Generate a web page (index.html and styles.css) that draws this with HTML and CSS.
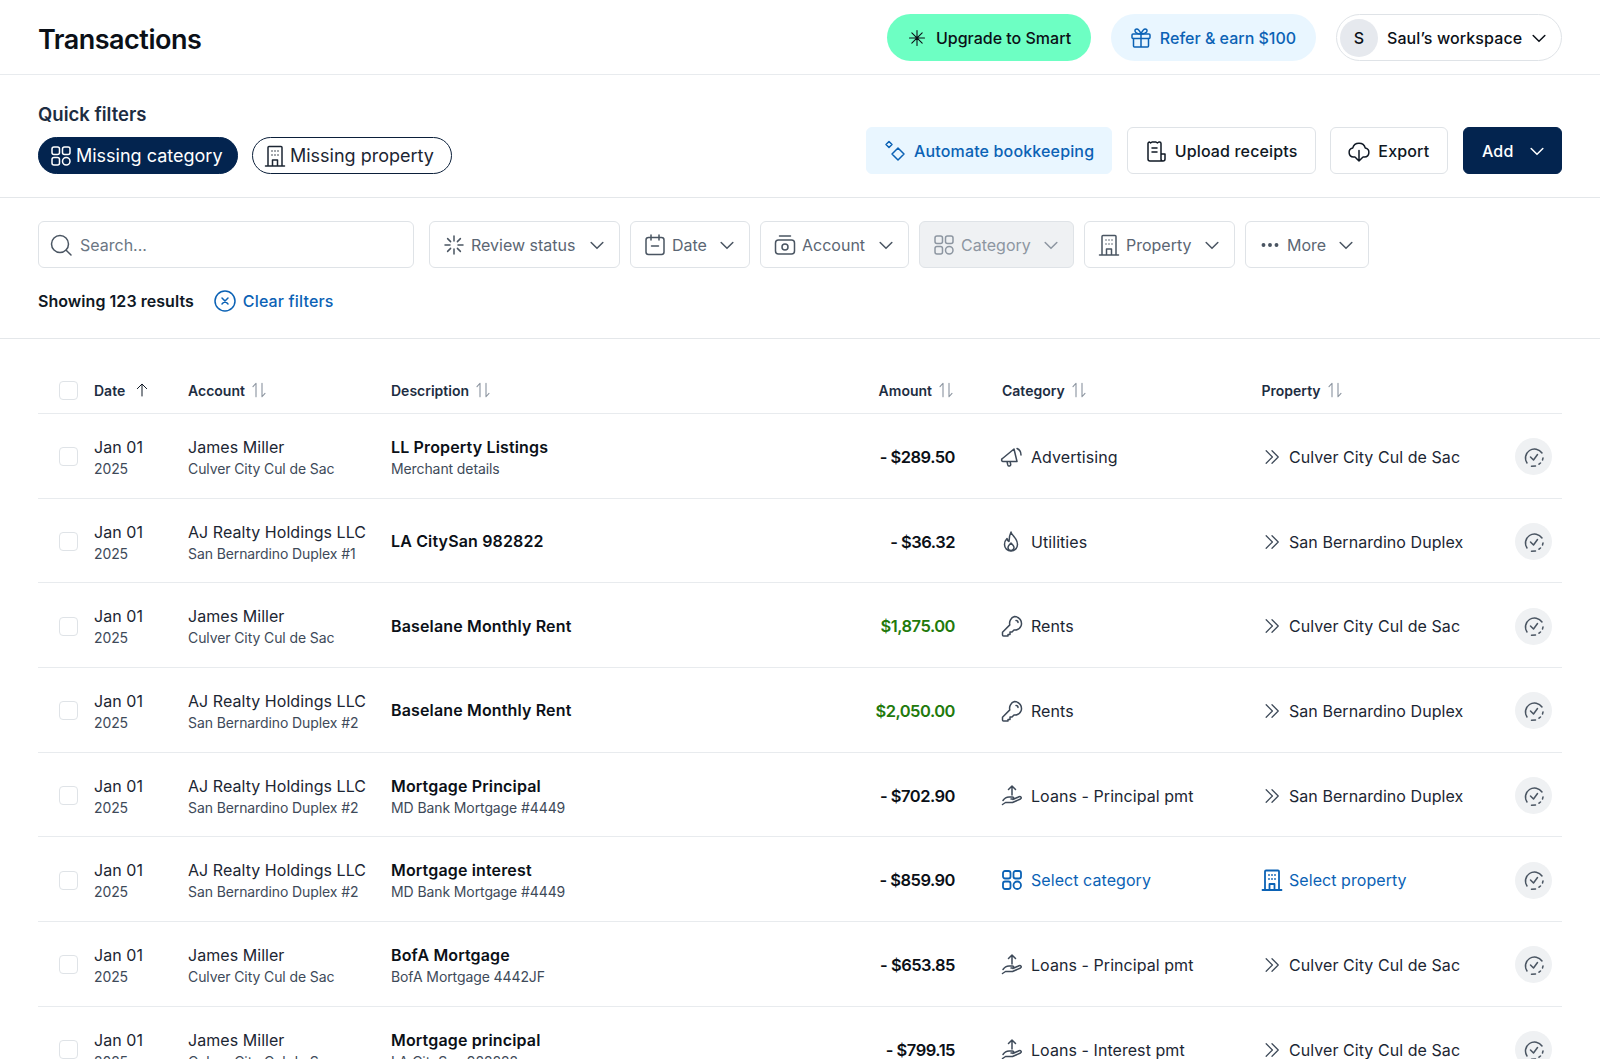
FILE: index.html
```html
<!DOCTYPE html>
<html lang="en">
<head>
  <meta charset="UTF-8">
  <title>Transactions</title>
  <link rel="stylesheet" href="styles.css">
</head>
<body>
  <svg class="icon-defs" aria-hidden="true">
    <symbol id="i-chevron" viewBox="0 0 24 24"><path d="M5 9l7 7 7-7"/></symbol>
    <symbol id="i-star" viewBox="0 0 24 24"><path d="M12 3v18M3 12h18M5.8 5.8l12.4 12.4M18.2 5.8L5.8 18.2"/></symbol>
    <symbol id="i-gift" viewBox="0 0 24 24"><rect x="3" y="8" width="18" height="4.5" rx="1"/><path d="M4.5 12.5V20a1 1 0 0 0 1 1h13a1 1 0 0 0 1-1v-7.5M12 8v13M12 8c-1-3-3-5.5-5-4.8-2 .8-1.5 4.8 5 4.8zM12 8c1-3 3-5.5 5-4.8 2 .8 1.5 4.8-5 4.8z"/></symbol>
    <symbol id="i-grid" viewBox="0 0 24 24"><rect x="3" y="3" width="7.5" height="7.5" rx="2"/><rect x="13.5" y="3" width="7.5" height="7.5" rx="2"/><rect x="3" y="13.5" width="7.5" height="7.5" rx="2"/><circle cx="17.25" cy="17.25" r="3.75"/></symbol>
    <symbol id="i-building" viewBox="0 0 24 24"><path d="M2.5 22h19M5 22V3.5a1 1 0 0 1 1-1h12a1 1 0 0 1 1 1V22M9.5 22v-6h5v6M9 7h.01M12 7h.01M15 7h.01M9 11h.01M12 11h.01M15 11h.01"/></symbol>
    <symbol id="i-sparkle" viewBox="0 0 24 24"><path d="M15 9l6 6-6 6-6-6zM6 2.5L9 5.5 6 8.5 3 5.5z"/></symbol>
    <symbol id="i-receipt" viewBox="0 0 24 24"><path d="M17 15V4.5A1.500 1.500 0 0 0 15.500 3h-.7l-1.400 1-1.400-1H8L6.600 4 5.500 3A1.500 1.500 0 0 0 4 4.500V20a2 2 0 0 0 2 2h13a2 2 0 0 0 2-2v-5h-4v5a2 2 0 0 0 2 2M8 9h5M8 13h5"/></symbol>
    <symbol id="i-cloud" viewBox="0 0 24 24"><path d="M8 18H6.500a4.500 4.500 0 0 1-.8-8.900 6.500 6.500 0 0 1 12.600 0A4.500 4.500 0 0 1 17.500 18H16M12 11.500V22M8.500 18.500L12 22l3.500-3.500"/></symbol>
    <symbol id="i-search" viewBox="0 0 24 24"><circle cx="11" cy="11" r="8.5"/><path d="M17.2 17.2L22 22"/></symbol>
    <symbol id="i-loader" viewBox="0 0 24 24"><path d="M12 3v5M12 16v5M3 12h5M16 12h5M5.6 5.6l3 3M15.4 15.4l3 3M18.4 5.6l-3 3M8.6 15.4l-3 3"/></symbol>
    <symbol id="i-calendar" viewBox="0 0 24 24"><rect x="3" y="4.5" width="18" height="17" rx="2.5"/><path d="M8 2v5M16 2v5M8.5 13h7"/></symbol>
    <symbol id="i-cash" viewBox="0 0 24 24"><rect x="2.5" y="7" width="19" height="14" rx="3"/><circle cx="12" cy="14" r="3"/><path d="M6.5 3h11"/></symbol>
    <symbol id="i-dots" viewBox="0 0 24 24"><circle class="dot" cx="5.5" cy="12" r="1.2"/><circle class="dot" cx="12" cy="12" r="1.2"/><circle class="dot" cx="18.5" cy="12" r="1.2"/></symbol>
    <symbol id="i-clear" viewBox="0 0 24 24"><circle cx="12" cy="12" r="10"/><path d="M9 9l6 6M15 9l-6 6"/></symbol>
    <symbol id="i-sort" viewBox="0 0 24 24"><path d="M8 21V3L4 7.5M16 3v18l4-4.500"/></symbol>
    <symbol id="i-up" viewBox="0 0 24 24"><path d="M12 21V3.5M5 10l7-7 7 7"/></symbol>
    <symbol id="i-megaphone" viewBox="0 0 24 24"><path d="M2.500 13.500L14 4l3 12.500H3.500a1.600 1.600 0 0 1-1-3zM7 16.500l.8 3.500a1.500 1.500 0 0 0 2.900-.7l-.6-2.800M17 3.500c2.500 1 4 3.500 4 6.500"/></symbol>
    <symbol id="i-flame" viewBox="0 0 24 24"><path d="M11 2c.5 3.500 6.500 6 6.500 12.500a6.500 6.500 0 0 1-13 0c0-2.500 1-4.500 2.500-6 .3 1.500 1 2.500 2 3C9 8.500 9.500 5 11 2z"/><path d="M11 13c1.500 1.500 3 3 3 4.500a3 3 0 0 1-6 0c0-1.500 1.500-3 3-4.500z"/></symbol>
    <symbol id="i-key" viewBox="0 0 24 24"><path d="M14.500 2.500a7 7 0 0 1 6.500 9.500c-1 2.500-3.500 4-6 4l-1-.1-2 2.100h-2v2.500H8v1.500H3.500a1 1 0 0 1-1-1v-2.800l7.300-7.300A7 7 0 0 1 14.500 2.500z"/><path d="M16 6.500a2 2 0 0 1 2 2"/></symbol>
    <symbol id="i-hand" viewBox="0 0 24 24"><path d="M12 11V2M8.500 5.500L12 2l3.500 3.500M2.500 20.500l3-2h7l8-3.500c1.500-1 .3-3-1.500-2.300L14 15h-3M3 16.500c2-3 4-3.500 6-3.500h3.500c1.500 0 2 2 .5 2.500"/></symbol>
    <symbol id="i-double" viewBox="0 0 24 24"><path d="M5 4.5l7.500 7.500L5 19.500M12 4.500l7.500 7.500-7.500 7.500"/></symbol>
    <symbol id="i-review" viewBox="0 0 24 24"><path d="M20 8a9 9 0 1 0-15 10M8.500 12l3 3 4-5.500M21 13l-.5 2M18.500 18L17 19.200M13.500 21l-4 .2"/></symbol>
  </svg>

  <div class="page">
    <header class="topbar">
      <h1 class="page-title">Transactions</h1>
      <div class="topbar-actions">
        <button class="pill pill-mint"><svg class="icon star"><use href="#i-star"/></svg>Upgrade to Smart</button>
        <button class="pill pill-sky"><svg class="icon icon-lg"><use href="#i-gift"/></svg>Refer &amp; earn $100</button>
        <button class="workspace">
          <span class="avatar">S</span>
          <span class="workspace-name">Saul’s workspace</span>
          <svg class="icon chevron"><use href="#i-chevron"/></svg>
        </button>
      </div>
    </header>

    <section class="quick">
      <div>
        <div class="quick-label">Quick filters</div>
        <div class="quick-pills">
          <button class="chip chip-on"><svg class="icon icon-lg"><use href="#i-grid"/></svg>Missing category</button>
          <button class="chip"><svg class="icon icon-lg"><use href="#i-building"/></svg>Missing property</button>
        </div>
      </div>
      <div class="quick-actions">
        <button class="action action-sky"><svg class="icon icon-lg"><use href="#i-sparkle"/></svg>Automate bookkeeping</button>
        <button class="action action-upload"><svg class="icon icon-lg"><use href="#i-receipt"/></svg>Upload receipts</button>
        <button class="action action-export"><svg class="icon icon-lg"><use href="#i-cloud"/></svg>Export</button>
        <button class="action action-navy">Add<svg class="icon chevron"><use href="#i-chevron"/></svg></button>
      </div>
    </section>

    <section class="filters">
      <div class="filter-row">
        <label class="search"><svg class="icon icon-lg"><use href="#i-search"/></svg><input class="search-input" placeholder="Search..."></label>
        <button class="filter f-review"><svg class="icon icon-lg"><use href="#i-loader"/></svg>Review status<svg class="icon chevron"><use href="#i-chevron"/></svg></button>
        <button class="filter f-date"><svg class="icon icon-lg"><use href="#i-calendar"/></svg>Date<svg class="icon chevron"><use href="#i-chevron"/></svg></button>
        <button class="filter f-account"><svg class="icon icon-lg"><use href="#i-cash"/></svg>Account<svg class="icon chevron"><use href="#i-chevron"/></svg></button>
        <button class="filter f-category filter-off"><svg class="icon icon-lg"><use href="#i-grid"/></svg>Category<svg class="icon chevron"><use href="#i-chevron"/></svg></button>
        <button class="filter f-property"><svg class="icon icon-lg"><use href="#i-building"/></svg>Property<svg class="icon chevron"><use href="#i-chevron"/></svg></button>
        <button class="filter f-more"><svg class="icon icon-lg"><use href="#i-dots"/></svg>More<svg class="icon chevron"><use href="#i-chevron"/></svg></button>
      </div>
      <div class="results">
        <span class="results-count">Showing 123 results</span>
        <a class="clear-link"><svg class="icon icon-lg"><use href="#i-clear"/></svg>Clear filters</a>
      </div>
    </section>

    <section class="table">
      <div class="row row-head">
        <span class="check"></span>
        <span class="th">Date<svg class="icon sort sort-on"><use href="#i-up"/></svg></span>
        <span class="th">Account<svg class="icon sort"><use href="#i-sort"/></svg></span>
        <span class="th">Description<svg class="icon sort"><use href="#i-sort"/></svg></span>
        <span class="th th-amount">Amount<svg class="icon sort"><use href="#i-sort"/></svg></span>
        <span class="th th-category">Category<svg class="icon sort"><use href="#i-sort"/></svg></span>
        <span class="th">Property<svg class="icon sort"><use href="#i-sort"/></svg></span>
        <span></span>
      </div>

      <div class="row">
        <span class="check"></span>
        <div><div class="line">Jan 01</div><div class="sub">2025</div></div>
        <div><div class="line">James Miller</div><div class="sub">Culver City Cul de Sac</div></div>
        <div><div class="line strong">LL Property Listings</div><div class="sub">Merchant details</div></div>
        <div class="amount">- $289.50</div>
        <div class="tag tag-category"><svg class="icon icon-lg"><use href="#i-megaphone"/></svg>Advertising</div>
        <div class="tag"><svg class="icon double"><use href="#i-double"/></svg>Culver City Cul de Sac</div>
        <div class="review"><svg class="icon"><use href="#i-review"/></svg></div>
      </div>

      <div class="row">
        <span class="check"></span>
        <div><div class="line">Jan 01</div><div class="sub">2025</div></div>
        <div><div class="line">AJ Realty Holdings LLC</div><div class="sub">San Bernardino Duplex #1</div></div>
        <div><div class="line strong">LA CitySan 982822</div></div>
        <div class="amount">- $36.32</div>
        <div class="tag tag-category"><svg class="icon icon-lg"><use href="#i-flame"/></svg>Utilities</div>
        <div class="tag"><svg class="icon double"><use href="#i-double"/></svg>San Bernardino Duplex</div>
        <div class="review"><svg class="icon"><use href="#i-review"/></svg></div>
      </div>

      <div class="row">
        <span class="check"></span>
        <div><div class="line">Jan 01</div><div class="sub">2025</div></div>
        <div><div class="line">James Miller</div><div class="sub">Culver City Cul de Sac</div></div>
        <div><div class="line strong">Baselane Monthly Rent</div></div>
        <div class="amount amount-in">$1,875.00</div>
        <div class="tag tag-category"><svg class="icon icon-lg"><use href="#i-key"/></svg>Rents</div>
        <div class="tag"><svg class="icon double"><use href="#i-double"/></svg>Culver City Cul de Sac</div>
        <div class="review"><svg class="icon"><use href="#i-review"/></svg></div>
      </div>

      <div class="row">
        <span class="check"></span>
        <div><div class="line">Jan 01</div><div class="sub">2025</div></div>
        <div><div class="line">AJ Realty Holdings LLC</div><div class="sub">San Bernardino Duplex #2</div></div>
        <div><div class="line strong">Baselane Monthly Rent</div></div>
        <div class="amount amount-in">$2,050.00</div>
        <div class="tag tag-category"><svg class="icon icon-lg"><use href="#i-key"/></svg>Rents</div>
        <div class="tag"><svg class="icon double"><use href="#i-double"/></svg>San Bernardino Duplex</div>
        <div class="review"><svg class="icon"><use href="#i-review"/></svg></div>
      </div>

      <div class="row">
        <span class="check"></span>
        <div><div class="line">Jan 01</div><div class="sub">2025</div></div>
        <div><div class="line">AJ Realty Holdings LLC</div><div class="sub">San Bernardino Duplex #2</div></div>
        <div><div class="line strong">Mortgage Principal</div><div class="sub">MD Bank Mortgage #4449</div></div>
        <div class="amount">- $702.90</div>
        <div class="tag tag-category"><svg class="icon icon-lg"><use href="#i-hand"/></svg>Loans - Principal pmt</div>
        <div class="tag"><svg class="icon double"><use href="#i-double"/></svg>San Bernardino Duplex</div>
        <div class="review"><svg class="icon"><use href="#i-review"/></svg></div>
      </div>

      <div class="row">
        <span class="check"></span>
        <div><div class="line">Jan 01</div><div class="sub">2025</div></div>
        <div><div class="line">AJ Realty Holdings LLC</div><div class="sub">San Bernardino Duplex #2</div></div>
        <div><div class="line strong">Mortgage interest</div><div class="sub">MD Bank Mortgage #4449</div></div>
        <div class="amount">- $859.90</div>
        <div class="tag tag-category tag-empty"><svg class="icon icon-lg"><use href="#i-grid"/></svg>Select category</div>
        <div class="tag tag-empty"><svg class="icon icon-lg"><use href="#i-building"/></svg>Select property</div>
        <div class="review"><svg class="icon"><use href="#i-review"/></svg></div>
      </div>

      <div class="row">
        <span class="check"></span>
        <div><div class="line">Jan 01</div><div class="sub">2025</div></div>
        <div><div class="line">James Miller</div><div class="sub">Culver City Cul de Sac</div></div>
        <div><div class="line strong">BofA Mortgage</div><div class="sub">BofA Mortgage 4442JF</div></div>
        <div class="amount">- $653.85</div>
        <div class="tag tag-category"><svg class="icon icon-lg"><use href="#i-hand"/></svg>Loans - Principal pmt</div>
        <div class="tag"><svg class="icon double"><use href="#i-double"/></svg>Culver City Cul de Sac</div>
        <div class="review"><svg class="icon"><use href="#i-review"/></svg></div>
      </div>

      <div class="row">
        <span class="check"></span>
        <div><div class="line">Jan 01</div><div class="sub">2025</div></div>
        <div><div class="line">James Miller</div><div class="sub">Culver City Cul de Sac</div></div>
        <div><div class="line strong">Mortgage principal</div><div class="sub">LA CitySan 982822</div></div>
        <div class="amount">- $799.15</div>
        <div class="tag tag-category"><svg class="icon icon-lg"><use href="#i-hand"/></svg>Loans - Interest pmt</div>
        <div class="tag"><svg class="icon double"><use href="#i-double"/></svg>Culver City Cul de Sac</div>
        <div class="review"><svg class="icon"><use href="#i-review"/></svg></div>
      </div>
    </section>
  </div>
</body>
</html>
```

FILE: styles.css
```css
* {
  box-sizing: border-box;
}
html, body {
  margin: 0;
  height: 100%;
  overflow: hidden;
}
body {
  font-family: "Inter", "Liberation Sans", sans-serif;
  font-size: 16px;
  color: #1c2633;
  background-color: #fff;
}
button {
  font-family: inherit;
  cursor: pointer;
  white-space: nowrap;
}
.icon-defs {
  display: none;
}
.icon {
  width: 24px;
  height: 24px;
  flex: none;
  fill: none;
  stroke: currentColor;
  stroke-width: 1.5;
  stroke-linecap: round;
  stroke-linejoin: round;
}
/* glyphs sit inside a 24 box, the negative margin keeps a 20px slot */
.icon-lg {
  margin: -2px;
}
.chevron {
  width: 20px;
  height: 20px;
  stroke-width: 1.8;
}
.star {
  width: 20px;
  height: 20px;
  stroke-width: 1.3;
}
.double {
  width: 20px;
  height: 20px;
}
.dot {
  fill: currentColor;
}
.page {
  height: 1059px;
  overflow: hidden;
}

/* top bar */
.topbar {
  display: flex;
  justify-content: space-between;
  align-items: center;
  padding: 14px 38px 13px;
  border-bottom: 1px solid #e8ebee;
}
.page-title {
  margin: 0;
  padding-top: 3px;
  font-size: 27px;
  font-weight: 600;
  letter-spacing: -0.5px;
  color: #0b1017;
}
.topbar-actions {
  display: flex;
  gap: 20px;
}
.pill {
  display: flex;
  align-items: center;
  justify-content: center;
  gap: 9px;
  width: 204px;
  height: 47px;
  border: 0;
  border-radius: 24px;
  font-size: 16px;
  font-weight: 500;
}
.pill-mint {
  background-color: #6dffc3;
  color: #0b1017;
}
.pill-sky {
  width: 205px;
  background-color: #e9f6ff;
  color: #0b62b5;
}
.workspace {
  display: flex;
  align-items: center;
  width: 226px;
  height: 47px;
  padding: 0 12px 0 3px;
  border: 1px solid #dfe3e7;
  border-radius: 24px;
  background-color: #fff;
  color: #0b1017;
}
.avatar {
  width: 38px;
  height: 38px;
  border-radius: 50%;
  background-color: #e6e9ee;
  font-size: 16px;
  font-weight: 500;
  line-height: 38px;
  text-align: center;
}
.workspace-name {
  margin: 0 auto 0 9px;
  font-size: 16px;
  font-weight: 500;
  letter-spacing: 0.1px;
}

/* quick filters */
.quick {
  display: flex;
  justify-content: space-between;
  align-items: flex-end;
  padding: 28px 38px 23px;
  border-bottom: 1px solid #e4e7ea;
}
.quick-label {
  font-size: 18.5px;
  font-weight: 600;
  line-height: 22px;
  color: #1d2d42;
  margin-bottom: 12px;
}
.quick-pills {
  display: flex;
  gap: 14px;
}
.chip {
  display: flex;
  align-items: center;
  gap: 5px;
  width: 200px;
  height: 37px;
  padding: 0 12px;
  border: 1px solid #0b1f3a;
  border-radius: 19px;
  background-color: #fff;
  color: #1c2633;
  font-size: 18px;
}
.chip-on {
  background-color: #03244f;
  border-color: #03244f;
  color: #fff;
}
.quick-actions {
  display: flex;
  gap: 14.67px;
}
.action {
  display: flex;
  align-items: center;
  gap: 9px;
  height: 47px;
  padding: 0 18px;
  border: 1px solid #dfe3e7;
  border-radius: 6px;
  background-color: #fff;
  color: #0f1824;
  font-size: 16px;
  font-weight: 500;
  letter-spacing: 0.15px;
}
.action-sky {
  width: 246px;
  background-color: #e9f6ff;
  border-color: #e9f6ff;
  color: #0b62b5;
}
.action-upload {
  width: 189px;
}
.action-export {
  width: 118px;
}
.action-navy {
  width: 99px;
  justify-content: space-between;
  padding-right: 14px;
  background-color: #03244f;
  border-color: #03244f;
  color: #fff;
}

/* filter row */
.filters {
  padding: 23px 38px 26px;
  border-bottom: 1px solid #e4e7ea;
}
.filter-row {
  display: flex;
  gap: 10px;
}
.search {
  display: flex;
  align-items: center;
  gap: 9px;
  width: 376px;
  height: 47px;
  margin-right: 5px;
  padding: 0 12px;
  border: 1px solid #dfe3e7;
  border-radius: 6px;
  color: #4a5562;
}
.search-input {
  flex: 1;
  border: 0;
  outline: 0;
  padding: 0;
  font-family: inherit;
  font-size: 16px;
}
.search-input::placeholder {
  color: #6b7683;
}
.filter {
  display: flex;
  align-items: center;
  gap: 7px;
  height: 47px;
  padding: 0 12px 0 14px;
  border: 1px solid #dfe3e7;
  border-radius: 6px;
  background-color: #fff;
  color: #5b6673;
  font-size: 16px;
}
.filter .icon-lg {
  color: #4a5562;
}
.filter .chevron {
  margin-left: auto;
  color: #4a5562;
}
.f-review { width: 191px; }
.f-date { width: 120px; }
.f-account { width: 149px; }
.f-category { width: 155px; }
.f-property { width: 151px; }
.f-more { width: 124px; }
.filter-off {
  background-color: #eff1f3;
  color: #8d96a1;
}
.filter-off .icon-lg,
.filter-off .chevron {
  color: #8d96a1;
}
.results {
  display: flex;
  align-items: center;
  margin-top: 22px;
  line-height: 22px;
}
.results-count {
  font-weight: 600;
  color: #0f1824;
  letter-spacing: 0.05px;
}
.clear-link {
  display: flex;
  align-items: center;
  gap: 8px;
  margin-left: 21px;
  font-weight: 500;
  letter-spacing: 0.15px;
  color: #0b62b5;
}

/* table */
.table {
  margin: 0 38px;
}
.row {
  display: grid;
  grid-template-columns: 56px 94px 203px 464px 100px 306.5px 253.5px 1fr;
  align-items: center;
  height: 84.7px;
  padding-top: 2px;
  border-bottom: 1px solid #e8ebee;
}
.row-head {
  height: 75px;
  padding-top: 28px;
}
.check {
  width: 19px;
  height: 19px;
  margin-left: 21px;
  border: 1px solid #dfe3e7;
  border-radius: 4px;
}
.th {
  display: flex;
  align-items: center;
  gap: 5px;
  font-size: 14px;
  font-weight: 600;
  color: #1d2d42;
}
.th .sort {
  width: 18px;
  height: 18px;
  color: #8d96a1;
}
.th .sort-on {
  width: 16px;
  height: 16px;
  margin-left: 4px;
  color: #0f1824;
}
.th-amount {
  grid-column: 5;
  justify-content: flex-end;
}
.th-category {
  padding-left: 47px;
}
.line {
  line-height: 23px;
  letter-spacing: 0.05px;
}
.sub {
  font-size: 14px;
  line-height: 19px;
  letter-spacing: -0.1px;
  color: #3e4a59;
}
.strong {
  font-weight: 600;
  letter-spacing: 0.15px;
  color: #0b1017;
}
.amount {
  font-size: 16.5px;
  font-weight: 600;
  letter-spacing: -0.5px;
  text-align: right;
  color: #0b1017;
}
.amount-in {
  color: #227a0c;
}
.tag {
  display: flex;
  align-items: center;
  gap: 7.5px;
  letter-spacing: 0.06px;
}
.tag .icon {
  color: #3e4a59;
}
.tag-category {
  gap: 9px;
  padding-left: 47px;
}
.tag-empty,
.tag-empty .icon {
  color: #0b62b5;
}
.tag-empty .icon {
  stroke-width: 1.8;
}
.review {
  display: flex;
  align-items: center;
  justify-content: center;
  width: 37px;
  height: 37px;
  border-radius: 50%;
  background-color: #eff1f3;
  color: #4a5562;
}
```
